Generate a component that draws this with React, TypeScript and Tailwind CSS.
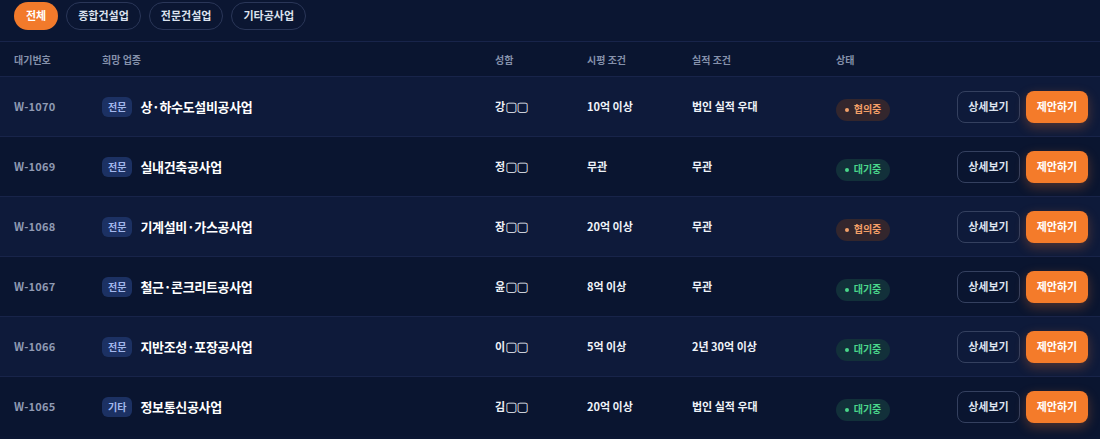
import { useState } from "react";

type Status = "협의중" | "대기중";

interface Waiting {
  id: string;
  kind: string;
  trade: string;
  name: string;
  capacity: string;
  record: string;
  status: Status;
}

const rows: Waiting[] = [
  { id: "W-1070", kind: "전문", trade: "상·하수도설비공사업", name: "강", capacity: "10억 이상", record: "법인 실적 우대", status: "협의중" },
  { id: "W-1069", kind: "전문", trade: "실내건축공사업", name: "정", capacity: "무관", record: "무관", status: "대기중" },
  { id: "W-1068", kind: "전문", trade: "기계설비·가스공사업", name: "장", capacity: "20억 이상", record: "무관", status: "협의중" },
  { id: "W-1067", kind: "전문", trade: "철근·콘크리트공사업", name: "윤", capacity: "8억 이상", record: "무관", status: "대기중" },
  { id: "W-1066", kind: "전문", trade: "지반조성·포장공사업", name: "이", capacity: "5억 이상", record: "2년 30억 이상", status: "대기중" },
  { id: "W-1065", kind: "기타", trade: "정보통신공사업", name: "김", capacity: "20억 이상", record: "법인 실적 우대", status: "대기중" },
];

const tabs = ["전체", "종합건설업", "전문건설업", "기타공사업"];

const grid = "grid grid-cols-[88px_393px_92px_105px_144px_100px_1fr] items-center pl-[14px] pr-[12px]";

function StatusPill({ status }: { status: Status }) {
  const talking = status === "협의중";
  return (
    <span
      className={
        "inline-flex items-center gap-[5px] h-[22px] w-[54px] justify-center rounded-full text-[10px] font-bold leading-none " +
        (talking ? "bg-[#33262d] text-[#f3a068]" : "bg-[#12303a] text-[#4ad68a]")
      }
    >
      <span className={"w-[4px] h-[4px] rounded-full " + (talking ? "bg-[#f3a068]" : "bg-[#4ad68a]")} />
      <span className="pb-[1px]">{status}</span>
    </span>
  );
}

export default function App() {
  const [tab, setTab] = useState("전체");

  return (
    <div
      className="w-[1100px] h-[439px] overflow-hidden bg-[#0b1632] text-white"
      style={{ fontFamily: '"Noto Sans CJK KR", "Noto Sans", sans-serif' }}
    >
      <div className="flex items-center gap-2 px-[14px] h-[42px] pb-[10px] border-b border-[#18244a]">
        {tabs.map((t) => (
          <button
            key={t}
            onClick={() => setTab(t)}
            className={
              "h-[28px] rounded-full text-[11px] font-bold " +
              (tab === t
                ? "px-[12px] bg-[#f27a2b] text-white"
                : "px-[11px] border border-[#2a3658] text-[#dbe2ee]")
            }
          >
            {t}
          </button>
        ))}
      </div>

      <div className={grid + " h-[34px] bg-[#0a1530] text-[10px] text-[#8591ab] font-bold"}>
        <span>대기번호</span>
        <span>희망 업종</span>
        <span>성함</span>
        <span>시평 조건</span>
        <span>실적 조건</span>
        <span>상태</span>
        <span />
      </div>

      {rows.map((r, i) => (
        <div
          key={r.id}
          className={
            grid +
            " h-[60px] border-t border-[#18244a] " +
            (i % 2 === 0 ? "bg-[#0e1a3a]" : "bg-[#0a1530]")
          }
        >
          <span className="text-[11px] font-bold text-[#8f9ab3] tracking-wide">{r.id}</span>
          <div className="flex items-center gap-[8px]">
            <span className="inline-flex items-center justify-center h-[20px] px-[6px] rounded-md bg-[#1c3163] text-[10px] font-bold text-[#a3b8ee]">
              {r.kind}
            </span>
            <span className="text-[13px] font-bold text-white tracking-tight">{r.trade}</span>
          </div>
          <span className="text-[11px] font-bold text-[#eef2f8]">
            {r.name}
            <span className="font-['DejaVu_Sans'] text-[13px] tracking-[-1px]">▢▢</span>
          </span>
          <span className="text-[11px] font-bold text-[#eef2f8]">{r.capacity}</span>
          <span className="text-[11px] font-bold text-[#eef2f8]">{r.record}</span>
          <div>
            <StatusPill status={r.status} />
          </div>
          <div className="flex justify-end gap-[6px]">
            <button className="h-[32px] w-[63px] rounded-lg border border-[#34405f] text-[11px] font-bold text-[#dbe2ee]">
              상세보기
            </button>
            <button className="h-[32px] w-[62px] rounded-lg bg-[#f47b2a] text-[11px] font-bold text-white shadow-[0_4px_12px_rgba(244,123,42,0.3)]">
              제안하기
            </button>
          </div>
        </div>
      ))}
    </div>
  );
}
